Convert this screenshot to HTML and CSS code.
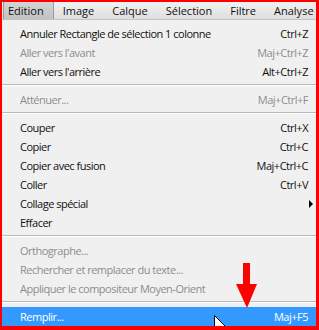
FILE: index.html
```html
<!DOCTYPE html>
<html lang="fr">
<head>
    <meta charset="UTF-8">
    <title>Edition</title>
    <link rel="stylesheet" href="styles.css">
</head>
<body>
    <div class="frame">
        <div class="menubar">
            <span class="bar-item active">Edition</span>
            <span class="bar-item">Image</span>
            <span class="bar-item">Calque</span>
            <span class="bar-item">Sélection</span>
            <span class="bar-item">Filtre</span>
            <span class="bar-item">Analyse</span>
        </div>

        <div class="menu">
            <div class="item"><span>Annuler Rectangle de sélection 1 colonne</span><span>Ctrl+Z</span></div>
            <div class="item disabled"><span>Aller vers l'avant</span><span>Maj+Ctrl+Z</span></div>
            <div class="item"><span>Aller vers l'arrière</span><span>Alt+Ctrl+Z</span></div>
            <div class="sep"></div>
            <div class="item disabled"><span>Atténuer...</span><span>Maj+Ctrl+F</span></div>
            <div class="sep"></div>
            <div class="item"><span>Couper</span><span>Ctrl+X</span></div>
            <div class="item"><span>Copier</span><span>Ctrl+C</span></div>
            <div class="item"><span>Copier avec fusion</span><span>Maj+Ctrl+C</span></div>
            <div class="item"><span>Coller</span><span>Ctrl+V</span></div>
            <div class="item submenu"><span>Collage spécial</span><span class="tri"></span></div>
            <div class="item"><span>Effacer</span><span></span></div>
            <div class="sep"></div>
            <div class="item disabled"><span>Orthographe...</span><span></span></div>
            <div class="item disabled"><span>Rechercher et remplacer du texte...</span><span></span></div>
            <div class="item disabled"><span>Appliquer le compositeur Moyen-Orient</span><span></span></div>
            <div class="sep"></div>
            <div class="item selected"><span>Remplir...</span><span>Maj+F5</span></div>
        </div>

        <!-- annotation arrow -->
        <svg class="red-arrow" width="22" height="46" viewBox="0 0 22 46">
            <rect x="7" y="0" width="7" height="24" fill="#f00"/>
            <polygon points="0,21 21,21 11,45" fill="#f00"/>
        </svg>

        <!-- mouse pointer -->
        <svg class="pointer" width="13" height="20" viewBox="0 0 13 20">
            <polygon points="0.5,0.5 0.5,16 4.5,12.5 7.5,19 9.5,18 6.5,11.5 11.5,11.5" fill="#fff" stroke="#000" stroke-width="1"/>
        </svg>
    </div>
</body>
</html>
```

FILE: styles.css
```css
/* Basic Reset */
html, body {
    margin: 0;
    padding: 0;
}
body {
    background: #ff0000;
    font-family: 'Open Sans', 'Noto Sans', sans-serif;
    font-size: 11px;
    letter-spacing: -0.5px;
    color: #111;
}

/* Frame */
.frame {
    position: relative;
    width: 314px;
    height: 324px;
    margin: 2px 0 0 2px;
    background: #f0f0f0;
    overflow: hidden;
}

/* Menu bar */
.menubar {
    display: flex;
    height: 17px;
    align-items: stretch;
    background: linear-gradient(#f2f2f2, #dedede);
    border-bottom: 1px solid #c4c4c4;
    padding-left: 1px;
    letter-spacing: 0;
}

.bar-item {
    display: flex;
    align-items: center;
    padding: 0 9px;
    line-height: 15px;
}

.bar-item.active {
    padding-left: 4px;
    background: linear-gradient(#d4d4d4, #c2c2c2);
    border: 1px solid #9a9a9a;
    border-top: none;
    border-bottom: none;
}

/* Menu */
.menu {
    padding-top: 4px;
}

.item {
    display: flex;
    justify-content: space-between;
    align-items: center;
    height: 19px;
    padding: 0 8px 0 18px;
}

.item.disabled {
    color: #8d8d8d;
}

.item.selected {
    background: #3399ff;
    color: #fff;
}

.tri {
    width: 0;
    height: 0;
    border-left: 4px solid #000;
    border-top: 4px solid transparent;
    border-bottom: 4px solid transparent;
    margin-right: -5px;
}

.sep {
    height: 9px;
    display: flex;
    align-items: center;
}

.sep::before {
    content: '';
    flex: 1;
    height: 1px;
    margin-top: -1px;
    background: #b8b8b8;
    border-bottom: 1px solid #fff;
}

/* Overlays */
.red-arrow {
    position: absolute;
    left: 234px;
    top: 261px;
}

.pointer {
    position: absolute;
    left: 212px;
    top: 313px;
}
```
